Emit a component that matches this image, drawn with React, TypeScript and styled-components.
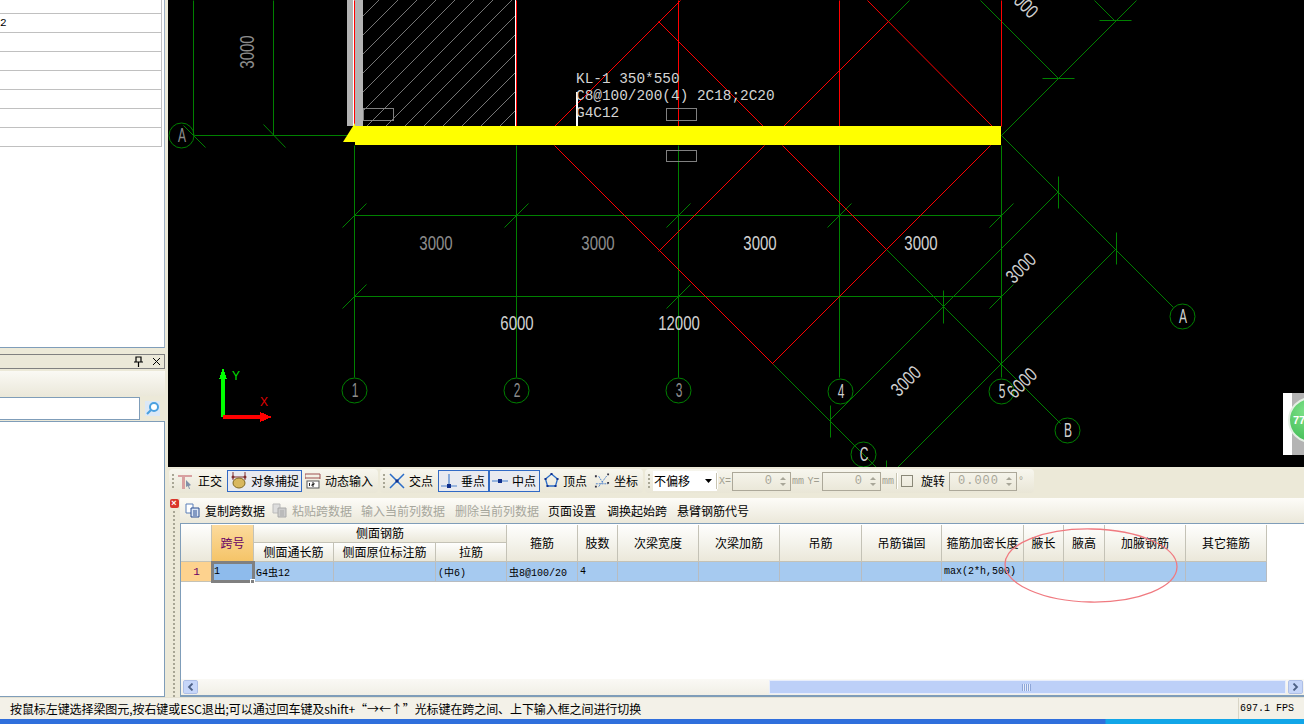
import styled, { createGlobalStyle } from 'styled-components';

const GlobalStyle = createGlobalStyle`
  html, body {
    margin: 0;
    padding: 0;
    height: 100%;
    overflow: hidden;
    background: #ece9d8;
  }
  body {
    font-family: "Noto Sans CJK SC", "Liberation Sans", sans-serif;
    font-size: 12px;
    color: #000;
  }
  * {
    box-sizing: border-box;
  }
`;

const Page = styled.div`
  width: 1304px;
  height: 724px;
  display: flex;
  flex-direction: column;
`;

const Main = styled.div`
  display: flex;
  height: 697px;
`;

/* left docked panels */
const Side = styled.div`
  width: 168px;
  display: flex;
  flex-direction: column;
  padding-right: 3px;
`;

const ListPane = styled.div`
  height: 348px;
  background: #fff;
  border-right: 1px solid #9db0c4;
  border-bottom: 1px solid #7f9db9;
  display: flex;
  flex-direction: column;
`;

const ListRow = styled.div<{ $h: number }>`
  width: 162px;
  height: ${(p) => p.$h}px;
  flex: none;
  border-right: 1px solid #c0c0c0;
  border-bottom: 1px solid #c0c0c0;
  font: 11px/18px "Liberation Mono", monospace;
`;

const DockTitle = styled.div`
  margin-top: 6px;
  height: 15px;
  flex: none;
  background: #ebe8d8;
  border-top: 1px solid #808080;
  border-bottom: 1px solid #808080;
  border-right: 1px solid #808080;
  display: flex;
  align-items: center;
  justify-content: flex-end;
  gap: 9px;
  padding-right: 3px;
`;

const DockBar = styled.div`
  margin-top: 2px;
  height: 25px;
  flex: none;
  background: linear-gradient(#faf9f4, #ebe8da);
`;

const SearchRow = styled.div`
  height: 25px;
  flex: none;
  display: flex;
  background: #ece9d8;
  padding: 1px 0;
`;

const SearchInput = styled.div`
  width: 140px;
  background: #fff;
  border: 1px solid #7f9db9;
  border-left: 0;
`;

const SearchButton = styled.div`
  flex: 1;
  display: flex;
  align-items: center;
  justify-content: center;
`;

const TreePane = styled.div`
  flex: 1;
  background: #fff;
  border: 1px solid #7f9db9;
  border-left: 0;
`;

const Work = styled.div`
  flex: 1;
  display: flex;
  flex-direction: column;
  min-width: 0;
`;

const CanvasWrap = styled.div`
  position: relative;
  height: 467px;
  flex: none;
  background: #000;
  overflow: hidden;
`;

const Drawing = styled.svg`
  display: block;
`;

const DimLabel = styled.text<{ $dim?: boolean }>`
  font-family: "Liberation Sans", sans-serif;
  font-size: 15px;
  text-anchor: middle;
  fill: ${(p) => (p.$dim ? '#8c8c8c' : '#d0d0d0')};
`;

const BeamLabel = styled.text`
  font-family: "Liberation Mono", monospace;
  font-size: 14.4px;
  fill: #d4d4d4;
`;

const AxisLabel = styled.text<{ $c: string }>`
  font-family: "Liberation Sans", sans-serif;
  font-size: 12px;
  fill: ${(p) => p.$c};
`;

const FloatBall = styled.div`
  position: absolute;
  right: 0;
  top: 393px;
  width: 21px;
  height: 62px;
  overflow: hidden;
  background: linear-gradient(90deg, #fff 0 9px, #b4b4b4 9px);
`;

const BallFace = styled.div`
  position: absolute;
  left: 5px;
  top: 4px;
  width: 46px;
  height: 46px;
  border-radius: 50%;
  border: 2px solid #e4efe4;
  background: radial-gradient(circle at 40% 30%, #7fe28a, #35b44a);
  color: #fff;
  font: bold 11px/42px "Liberation Sans", sans-serif;
  padding-left: 3px;
`;

/* snap toolbar */
const ToolRow = styled.div`
  height: 31px;
  flex: none;
  background: #ece9d8;
  display: flex;
  padding: 2px 0 0 1px;
  gap: 2px;
`;

const ToolBand = styled.div<{ $w: number }>`
  width: ${(p) => p.$w}px;
  height: 24px;
  display: flex;
  align-items: center;
  border-radius: 4px;
  background: linear-gradient(#f7f6ee, #e9e6d6);
`;

const Grip = styled.div`
  width: 2px;
  height: 14px;
  margin: 0 3px 0 3px;
  flex: none;
  background: repeating-linear-gradient(#a8a695 0 2px, transparent 2px 4px);
`;

const ToolItem = styled.div<{ $w: number; $pl?: number; $on?: boolean }>`
  width: ${(p) => p.$w}px;
  height: 22px;
  flex: none;
  display: flex;
  align-items: center;
  gap: 4px;
  padding: 0 0 1px ${(p) => p.$pl ?? 3}px;
  white-space: nowrap;
  border: 1px solid ${(p) => (p.$on ? '#316ac5' : 'transparent')};
  background: ${(p) => (p.$on ? '#e8eaf0' : 'transparent')};
`;

const SelectBox = styled.div`
  width: 64px;
  height: 20px;
  flex: none;
  background: #fff;
  display: flex;
  align-items: center;
  justify-content: space-between;
  padding: 0 5px 1px 1px;
`;

const SepLine = styled.div<{ $ml: number }>`
  width: 1px;
  height: 16px;
  flex: none;
  margin-left: ${(p) => p.$ml}px;
  background: #fff;
  box-shadow: -1px 0 0 #c8c5b2;
`;

const MutedMono = styled.span<{ $w: number }>`
  width: ${(p) => p.$w}px;
  flex: none;
  font: 10px "Liberation Mono", monospace;
  color: #a09e90;
  text-align: center;
`;

const SpinBox = styled.div<{ $w: number }>`
  width: ${(p) => p.$w}px;
  height: 19px;
  flex: none;
  border: 1px solid #aca899;
  display: flex;
  align-items: center;
  justify-content: flex-end;
  font: 12px "Liberation Mono", monospace;
  color: #a8a698;
  letter-spacing: 1px;
`;

const SpinArrows = styled.div`
  width: 14px;
  margin-left: 3px;
  display: flex;
  flex-direction: column;
  align-items: center;
  gap: 3px;
  &::before, &::after {
    content: "";
    border-left: 3px solid transparent;
    border-right: 3px solid transparent;
  }
  &::before { border-bottom: 3px solid #a8a698; }
  &::after { border-top: 3px solid #a8a698; }
`;

const CheckBox = styled.div`
  width: 12px;
  height: 12px;
  flex: none;
  margin: 0 8px 0 3px;
  border: 1px solid #8a8878;
`;

const PlainLabel = styled.span`
  flex: none;
  margin-right: 4px;
  padding-bottom: 1px;
  white-space: nowrap;
`;

/* span editor */
const Editor = styled.div`
  flex: 1;
  display: flex;
  min-height: 0;
`;

const EditorStrip = styled.div`
  width: 12px;
  flex: none;
  background: #ece9d8;
  display: flex;
  flex-direction: column;
  align-items: center;
  padding-top: 1px;
  gap: 3px;
`;

const CloseBadge = styled.div`
  width: 9px;
  height: 9px;
  background: #d9352a;
  border-radius: 2px;
  color: #fff;
  font: bold 9px/9px "Liberation Sans", sans-serif;
  text-align: center;
`;

const StripGrip = styled.div`
  width: 2px;
  flex: 1;
  background: repeating-linear-gradient(#a8a695 0 2px, transparent 2px 4px);
`;

const EditorBody = styled.div`
  flex: 1;
  min-width: 0;
  display: flex;
  flex-direction: column;
`;

const ActionBar = styled.div`
  height: 26px;
  flex: none;
  display: flex;
  align-items: center;
  padding: 0 0 1px 5px;
  background: linear-gradient(#fdfcf8, #ebe8da);
  border-bottom: 1px solid #7f9db9;
`;

const Action = styled.div<{ $w: number; $off?: boolean }>`
  width: ${(p) => p.$w}px;
  flex: none;
  display: flex;
  align-items: center;
  gap: 5px;
  white-space: nowrap;
  color: ${(p) => (p.$off ? '#a6a69c' : '#000')};
`;

const GridWrap = styled.div`
  position: relative;
  flex: 1;
  background: #fff;
  border-left: 1px solid #7f9db9;
  padding-top: 1px;
`;

const SpanGrid = styled.div`
  display: grid;
  width: 1086px;
  grid-template-columns: 31px 42px 80px 102px 71px 71px 40px 81px 81px 82px 80px 82px 40px 41px 81px 81px;
  grid-template-rows: 18px 19px 20px;
`;

const HeadCell = styled.div<{ $span?: number; $tall?: boolean; $accent?: boolean }>`
  grid-column: span ${(p) => p.$span ?? 1};
  grid-row: span ${(p) => (p.$tall ? 2 : 1)};
  display: flex;
  align-items: center;
  justify-content: center;
  padding-bottom: 2px;
  white-space: nowrap;
  border-right: 1px solid #c4c2b6;
  border-bottom: 1px solid #c4c2b6;
  color: ${(p) => (p.$accent ? '#660066' : '#000')};
  background: ${(p) =>
    p.$accent ? 'linear-gradient(#fcdb9e, #f5c468)' : 'linear-gradient(#fefefd, #ebe8da)'};
`;

const RowNo = styled.div`
  display: flex;
  align-items: center;
  justify-content: center;
  background: #fdd28e;
  color: #660066;
  font: 11px "Liberation Mono", monospace;
  border-bottom: 1px solid #c4c2b6;
`;

const DataCell = styled.div<{ $sel?: boolean }>`
  position: relative;
  display: flex;
  align-items: center;
  padding-left: 2px;
  background: ${(p) => (p.$sel ? '#8ebbec' : '#a6caf0')};
  font: 10px "Liberation Mono", "Noto Sans CJK SC", monospace;
  white-space: nowrap;
  overflow: ${(p) => (p.$sel ? 'visible' : 'hidden')};
  border-right: 1px solid #b8bcc0;
  border-bottom: 1px solid #b8bcc0;
  outline: ${(p) => (p.$sel ? '3px solid #808080' : 'none')};
  outline-offset: -2px;
  z-index: ${(p) => (p.$sel ? 1 : 0)};
`;

const FillHandle = styled.div`
  position: absolute;
  right: -2px;
  bottom: -3px;
  width: 5px;
  height: 5px;
  background: #808080;
  border: 1px solid #fff;
`;

const RingNote = styled.svg`
  position: absolute;
  left: 0;
  top: 0;
  pointer-events: none;
`;

const HScroll = styled.div`
  height: 18px;
  flex: none;
  display: flex;
  align-items: center;
  padding: 0 1px 0 2px;
  background: linear-gradient(#faf9f5, #f1efe6);
  border-left: 1px solid #7f9db9;
  border-bottom: 2px solid #7f9db9;
`;

const ScrollButton = styled.div`
  width: 15px;
  height: 14px;
  flex: none;
  display: flex;
  align-items: center;
  justify-content: center;
  background: #c6d6f9;
  border: 1px solid #eef3fe;
  border-radius: 2px;
  outline: 1px solid #aebfe6;
  outline-offset: -1px;
`;

const ScrollTrack = styled.div`
  flex: 1;
  padding-left: 571px;
  padding-right: 2px;
`;

const ScrollThumb = styled.div`
  height: 14px;
  background: #bdd0f8;
  border: 1px solid #e8eefc;
  display: flex;
  align-items: center;
  justify-content: center;
  padding-right: 2px;
`;

const ThumbGrip = styled.div`
  width: 9px;
  height: 7px;
  background: repeating-linear-gradient(90deg, #8ea6d8 0 1px, #e4ecfc 1px 2px);
`;

/* status + taskbar strip */
const StatusBar = styled.div`
  height: 22px;
  flex: none;
  display: flex;
  background: #f3f1e8;
  border-top: 1px solid #e4e1d2;
`;

const StatusText = styled.div`
  flex: 1;
  padding-left: 10px;
  line-height: 21px;
  letter-spacing: -0.08px;
  white-space: nowrap;
`;

const FpsCell = styled.div`
  width: 66px;
  flex: none;
  padding-left: 1px;
  border-left: 1px solid #d8d5c6;
  font: 10px/21px "Liberation Mono", monospace;
  white-space: nowrap;
`;

const TaskStrip = styled.div`
  height: 5px;
  flex: none;
  background: linear-gradient(90deg, #2f6fdc 0 1105px, #12a6e8 1106px);
`;

type Seg = [number, number, number, number];

const green: Seg[] = [
  [193, 0, 193, 135], [273, 0, 273, 135], [194, 135, 355, 135],
  [354, 145, 354, 377], [516, 145, 516, 377], [678, 145, 678, 377], [839, 145, 839, 377], [1001, 145, 1001, 377],
  [354, 215, 1001, 215], [354, 296, 1001, 296],
  [886, 249, 1060, 423], [773, 364, 887, 478], [829, 420, 1058, 191], [897, 467, 1116, 248],
  [1001, 135, 1173, 307], [1001, 135, 1136, 0], [980, 0, 1058, 78], [1094, 0, 1115, 21], [888, 21, 909, 0],
  [943, 290, 943, 323], [830, 405, 830, 437], [1058, 176, 1058, 208], [1116, 232, 1116, 264], [886, 460, 886, 467],
  [1042, 78, 1074, 78], [1099, 20, 1131, 20],
  [183, 125, 205, 147], [263, 124, 285, 147],
  ...[354, 516, 678, 839, 1001].map((x): Seg => [x - 12, 227, x + 12, 203]),
  ...[354, 678, 1001].map((x): Seg => [x - 12, 308, x + 12, 284]),
];

const red: Seg[] = [
  [354, 0, 354, 126], [516, 0, 516, 126], [678, 0, 678, 126], [839, 0, 839, 126], [1001, 0, 1001, 126],
  [658, 21, 763, 126], [782, 145, 886, 249], [554, 126, 680, 0], [554, 145, 773, 364],
  [658, 251, 764, 145], [782, 127, 888, 21], [867, 0, 992, 126], [990, 145, 772, 363],
];

const hatchStarts = Array.from({ length: 16 }, (_, i) => 234 + i * 19);

const bubbles: [number, number, string, boolean][] = [
  [181, 135, 'A', true], [354, 390, '1', true], [516, 390, '2', true], [678, 390, '3', true],
  [840, 391, '4', false], [1001, 391, '5', false], [1182, 316, 'A', false], [1067, 430, 'B', false], [863, 454, 'C', false],
];

const dims: [number, number, number, string, boolean][] = [
  [247, 52, -90, '3000', true], [436, 243, 0, '3000', true], [598, 243, 0, '3000', true],
  [760, 243, 0, '3000', false], [921, 243, 0, '3000', false], [517, 323, 0, '6000', false], [679, 323, 0, '12000', false],
  [1021, 268, -45, '3000', false], [906, 381, -45, '3000', false], [1022, 383, -45, '6000', false], [1023, 3, 45, '3000', false],
];

function Plan() {
  return (
    <Drawing width={1136} height={467} viewBox="168 0 1136 467">
      <rect x={347} y={0} width={16} height={126} fill="#b4b4b4" />
      <clipPath id="hatch">
        <rect x={363} y={0} width={152} height={126} />
      </clipPath>
      <g clipPath="url(#hatch)" stroke="#a8a8a8" strokeWidth={0.7}>
        {hatchStarts.map((c) => (
          <line key={c} x1={c} y1={126} x2={c + 126} y2={0} />
        ))}
      </g>
      <rect x={353} y={0} width={1} height={126} fill="#fff" />
      <rect x={515} y={0} width={1} height={126} fill="#fff" />
      <g stroke="#008000" transform="translate(.5 .5)">
        {green.map((s, i) => (
          <line key={i} x1={s[0]} y1={s[1]} x2={s[2]} y2={s[3]} />
        ))}
      </g>
      <g stroke="#ff0000" transform="translate(.5 .5)">
        {red.map((s, i) => (
          <line key={i} x1={s[0]} y1={s[1]} x2={s[2]} y2={s[3]} />
        ))}
      </g>
      <rect x={576} y={92} width={2} height={34} fill="#fff" />
      <g fill="none" stroke="#808080">
        <rect x={363.5} y={108.5} width={30} height={12} />
        <rect x={666.5} y={108.5} width={30} height={12} />
        <rect x={666.5} y={150.5} width={30} height={11} />
      </g>
      <rect x={355} y={126} width={646} height={19} fill="#ffff00" />
      <polygon points="343,142 355,123 355,142" fill="#ffff00" />
      <g fill="none" stroke="#008000">
        {bubbles.map(([x, y, t]) => (
          <circle key={`${x}${t}`} cx={x + 0.5} cy={y + 0.5} r={12.5} />
        ))}
      </g>
      {bubbles.map(([x, y, t, dim]) => (
        <DimLabel key={`${x}${t}`} $dim={dim} transform={`translate(${x + 1} ${y + 7}) scale(.8 1.3)`}>
          {t}
        </DimLabel>
      ))}
      {dims.map(([x, y, a, t, dim]) => (
        <DimLabel key={`${x}${y}`} $dim={dim} y={5} transform={`translate(${x} ${y}) rotate(${a}) scale(1 1.3)`}>
          {t}
        </DimLabel>
      ))}
      <BeamLabel x={576} y={83}>KL-1 350*550</BeamLabel>
      <BeamLabel x={576} y={100}>C8@100/200(4) 2C18;2C20</BeamLabel>
      <BeamLabel x={576} y={117}>G4C12</BeamLabel>
      <g shapeRendering="crispEdges">
        <rect x={221} y={378} width={4} height={39} fill="#00ff00" />
        <polygon points="223,368 219,379 227,379" fill="#00ff00" />
        <rect x={223} y={415} width={38} height={4} fill="#ff0000" />
        <polygon points="272,417 260,412 260,422" fill="#ff0000" />
      </g>
      <AxisLabel $c="#00e000" x={232} y={380}>Y</AxisLabel>
      <AxisLabel $c="#e00000" x={260} y={406}>X</AxisLabel>
    </Drawing>
  );
}

const OrthoIcon = () => (
  <svg width="16" height="16" viewBox="0 0 16 16">
    <path d="M0 2h14v2H0zM4 4h3v12H4z" fill="#d8a0a0" />
    <path d="M8 7l5 5-2 1 1 3-1 0-1-3-2 1z" fill="#8090a8" />
  </svg>
);

const SnapIcon = () => (
  <svg width="16" height="17" viewBox="0 0 16 17">
    <path d="M2 0v8M14 0v8M2 5h12" stroke="#803030" fill="none" />
    <ellipse cx="8" cy="11" rx="6" ry="5" fill="#d8b860" stroke="#806820" />
    <circle cx="2" cy="5" r="1.500" fill="#803030" />
    <circle cx="14" cy="5" r="1.500" fill="#803030" />
  </svg>
);

const DynIcon = () => (
  <svg width="16" height="16" viewBox="0 0 16 16">
    <path d="M0 1h15M0 5h15M0 1v5M15 1v5" stroke="#a05050" fill="none" />
    <rect x="2" y="8" width="12" height="7" fill="#fff" stroke="#555" />
    <path d="M4.500 10v3M7 10h2v1.500H7V13h2" stroke="#222" fill="none" />
  </svg>
);

const CrossIcon = () => (
  <svg width="16" height="16" viewBox="0 0 16 16">
    <path d="M1 1l14 14M15 1L1 15" stroke="#2a6cc8" strokeWidth="1.500" />
    <rect x="6.500" y="6.500" width="3" height="3" fill="#10308c" />
  </svg>
);

const PerpIcon = () => (
  <svg width="16" height="16" viewBox="0 0 16 16">
    <path d="M0 13h16M8 1v12" stroke="#4a80cc" strokeWidth="1.200" />
    <rect x="6" y="11" width="4" height="4" fill="#10308c" />
  </svg>
);

const MidIcon = () => (
  <svg width="16" height="16" viewBox="0 0 16 16">
    <path d="M0 8h16" stroke="#7aa0d8" strokeWidth="1.500" />
    <rect x="6" y="6" width="4" height="4" fill="#10308c" />
  </svg>
);

const PentIcon = () => (
  <svg width="15" height="15" viewBox="0 0 14 15">
    <path d="M7 1l6 5-2 7H3L1 6z" fill="none" stroke="#2a6cc8" strokeWidth="1.300" />
    <path d="M6 0h2v2H6zM0 5h2v2H0zM12 5h2v2h-2zM2 12h2v2H2zM10 12h2v2h-2z" fill="#10308c" />
  </svg>
);

const CoordIcon = () => (
  <svg width="16" height="17" viewBox="0 0 17 17">
    <path d="M2 12h13M5 15L14 3M5 4l5 8" stroke="#4a80cc" fill="none" strokeDasharray="2 1" />
    <path d="M1 3h2v2H1zM14 1h2v2h-2zM1 14h2v2H1zM14 10h2v2h-2z" fill="#334" />
  </svg>
);

const CopyIcon = ({ off }: { off?: boolean }) => (
  <svg width="15" height="15" viewBox="0 0 15 15">
    <path d="M1 1h7v9H1z" fill={off ? '#ddd' : '#fff'} stroke={off ? '#bbb' : '#5a7fb8'} />
    <path d="M6 5h8v9H6z" fill={off ? '#ccc' : '#dbe6f6'} stroke={off ? '#aaa' : '#2d4f90'} />
    <path d="M8 8h4M8 10h4M8 12h4" stroke={off ? '#aaa' : '#2d4f90'} />
  </svg>
);

const Spin = ({ w, v }: { w: number; v: string }) => (
  <SpinBox $w={w}>
    {v}
    <SpinArrows />
  </SpinBox>
);

export default function App() {
  return (
    <Page>
      <GlobalStyle />
      <Main>
        <Side>
          <ListPane>
            <ListRow $h={14} />
            <ListRow $h={19}>2</ListRow>
            <ListRow $h={19} />
            <ListRow $h={19} />
            <ListRow $h={19} />
            <ListRow $h={19} />
            <ListRow $h={19} />
            <ListRow $h={19} />
          </ListPane>
          <DockTitle>
            <svg width="9" height="11" viewBox="0 0 9 11">
              <path d="M2 1h5v5H2zM0 6h9M4.500 6v5" fill="none" stroke="#000" strokeWidth="1.200" />
            </svg>
            <svg width="9" height="9" viewBox="0 0 9 9">
              <path d="M1 1l7 7M8 1L1 8" stroke="#000" />
            </svg>
          </DockTitle>
          <DockBar />
          <SearchRow>
            <SearchInput />
            <SearchButton>
              <svg width="15" height="15" viewBox="0 0 15 15">
                <rect width="15" height="15" fill="#dbe8f6" />
                <circle cx="9" cy="6" r="4" fill="#fff" stroke="#4aa0e0" strokeWidth="2" />
                <path d="M6 9l-4 4" stroke="#4aa0e0" strokeWidth="2.200" />
              </svg>
            </SearchButton>
          </SearchRow>
          <TreePane />
        </Side>
        <Work>
          <CanvasWrap>
            <Plan />
            <FloatBall>
              <BallFace>77</BallFace>
            </FloatBall>
          </CanvasWrap>
          <ToolRow>
            <ToolBand $w={209}>
              <Grip />
              <ToolItem $w={50} $pl={0}><OrthoIcon />正交</ToolItem>
              <ToolItem $w={75} $on><SnapIcon />对象捕捉</ToolItem>
              <ToolItem $w={72} $pl={2}><DynIcon />动态输入</ToolItem>
            </ToolBand>
            <ToolBand $w={263}>
              <Grip />
              <ToolItem $w={50} $pl={0}><CrossIcon />交点</ToolItem>
              <ToolItem $w={51} $pl={2} $on><PerpIcon />垂点</ToolItem>
              <ToolItem $w={51} $pl={2} $on><MidIcon />中点</ToolItem>
              <ToolItem $w={50}><PentIcon />顶点</ToolItem>
              <ToolItem $w={50}><CoordIcon />坐标</ToolItem>
            </ToolBand>
            <ToolBand $w={389}>
              <Grip />
              <SelectBox>
                不偏移
                <svg width="7" height="4" viewBox="0 0 7 4"><path d="M0 0h7L3.500 4z" fill="#000" /></svg>
              </SelectBox>
              <SepLine $ml={0} />
              <MutedMono $w={14}>X=</MutedMono>
              <Spin w={59} v="0" />
              <MutedMono $w={14}>mm</MutedMono>
              <MutedMono $w={17}>Y=</MutedMono>
              <Spin w={59} v="0" />
              <MutedMono $w={14}>mm</MutedMono>
              <SepLine $ml={2} />
              <CheckBox />
              <PlainLabel>旋转</PlainLabel>
              <Spin w={68} v="0.000" />
              <MutedMono $w={8}>°</MutedMono>
            </ToolBand>
          </ToolRow>
          <Editor>
            <EditorStrip>
              <CloseBadge>×</CloseBadge>
              <StripGrip />
            </EditorStrip>
            <EditorBody>
              <ActionBar>
                <Action $w={87}><CopyIcon />复制跨数据</Action>
                <Action $w={89} $off><CopyIcon off />粘贴跨数据</Action>
                <Action $w={94} $off>输入当前列数据</Action>
                <Action $w={93} $off>删除当前列数据</Action>
                <Action $w={59}>页面设置</Action>
                <Action $w={70}>调换起始跨</Action>
                <Action $w={75}>悬臂钢筋代号</Action>
              </ActionBar>
              <GridWrap>
                <SpanGrid>
                  <HeadCell $tall />
                  <HeadCell $tall $accent>跨号</HeadCell>
                  <HeadCell $span={3}>侧面钢筋</HeadCell>
                  <HeadCell $tall>箍筋</HeadCell>
                  <HeadCell $tall>肢数</HeadCell>
                  <HeadCell $tall>次梁宽度</HeadCell>
                  <HeadCell $tall>次梁加筋</HeadCell>
                  <HeadCell $tall>吊筋</HeadCell>
                  <HeadCell $tall>吊筋锚固</HeadCell>
                  <HeadCell $tall>箍筋加密长度</HeadCell>
                  <HeadCell $tall>腋长</HeadCell>
                  <HeadCell $tall>腋高</HeadCell>
                  <HeadCell $tall>加腋钢筋</HeadCell>
                  <HeadCell $tall>其它箍筋</HeadCell>
                  <HeadCell>侧面通长筋</HeadCell>
                  <HeadCell>侧面原位标注筋</HeadCell>
                  <HeadCell>拉筋</HeadCell>
                  <RowNo>1</RowNo>
                  <DataCell $sel>1<FillHandle /></DataCell>
                  <DataCell>G4虫12</DataCell>
                  <DataCell />
                  <DataCell>(中6)</DataCell>
                  <DataCell>虫8@100/20</DataCell>
                  <DataCell>4</DataCell>
                  <DataCell />
                  <DataCell />
                  <DataCell />
                  <DataCell />
                  <DataCell>max(2*h,500)</DataCell>
                  <DataCell />
                  <DataCell />
                  <DataCell />
                  <DataCell />
                </SpanGrid>
                <RingNote width={1124} height={156}>
                  <ellipse cx={910} cy={41.500} rx={86} ry={36.500} fill="none" stroke="#f07a80" strokeWidth={1.300} transform="rotate(1 910 41.500)" />
                </RingNote>
              </GridWrap>
              <HScroll>
                <ScrollButton>
                  <svg width="7" height="8" viewBox="0 0 7 8"><path d="M5.500 .5L2 4l3.500 3.500" fill="none" stroke="#4d6185" strokeWidth="1.800" /></svg>
                </ScrollButton>
                <ScrollTrack>
                  <ScrollThumb><ThumbGrip /></ScrollThumb>
                </ScrollTrack>
                <ScrollButton>
                  <svg width="7" height="8" viewBox="0 0 7 8"><path d="M1.500 .5L5 4 1.500 7.500" fill="none" stroke="#4d6185" strokeWidth="1.800" /></svg>
                </ScrollButton>
              </HScroll>
            </EditorBody>
          </Editor>
        </Work>
      </Main>
      <StatusBar>
        <StatusText>按鼠标左键选择梁图元,按右键或ESC退出;可以通过回车键及shift+“→←↑”光标键在跨之间、上下输入框之间进行切换</StatusText>
        <FpsCell>697.1 FPS</FpsCell>
      </StatusBar>
      <TaskStrip />
    </Page>
  );
}
